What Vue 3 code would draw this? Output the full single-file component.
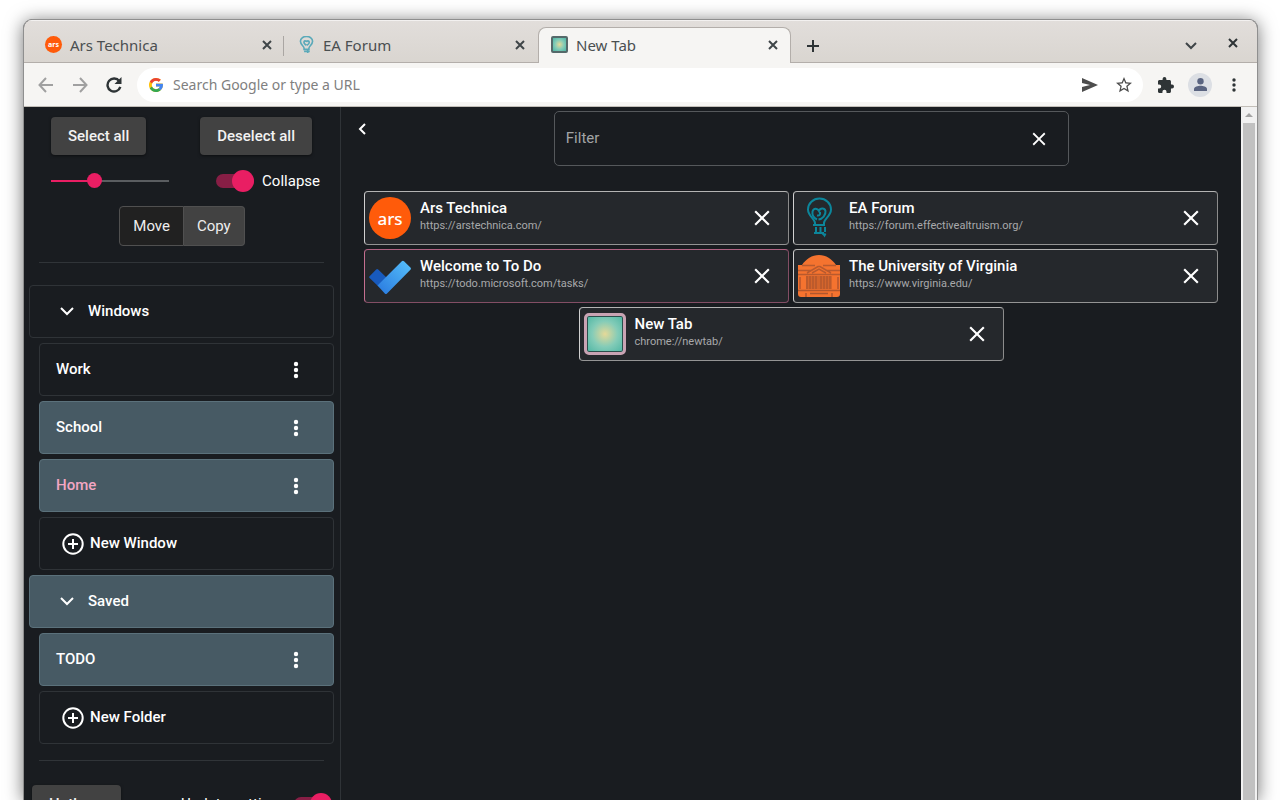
<script setup>
import { ref } from 'vue'

const browserTabs = [
  { title: 'Ars Technica', icon: 'ars', active: false },
  { title: 'EA Forum', icon: 'ea', active: false },
  { title: 'New Tab', icon: 'newtab', active: true },
]

const rows = [
  { label: 'Windows', kind: 'group' },
  { label: 'Work', kind: 'item' },
  { label: 'School', kind: 'item', selected: true },
  { label: 'Home', kind: 'item', selected: true, current: true },
  { label: 'New Window', kind: 'add' },
  { label: 'Saved', kind: 'group', selected: true },
  { label: 'TODO', kind: 'item', selected: true },
  { label: 'New Folder', kind: 'add' },
]

const cards = [
  { title: 'Ars Technica', url: 'https://arstechnica.com/', icon: 'ars' },
  { title: 'EA Forum', url: 'https://forum.effectivealtruism.org/', icon: 'ea' },
  { title: 'Welcome to To Do', url: 'https://todo.microsoft.com/tasks/', icon: 'todo', pinned: true },
  { title: 'The University of Virginia', url: 'https://www.virginia.edu/', icon: 'uva' },
  { title: 'New Tab', url: 'chrome://newtab/', icon: 'newtab' },
]

const zoom = ref(35)
const collapse = ref(true)
const updateSettings = ref(true)
const mode = ref('Move')
const filter = ref('')
const address = ref('')
const columns = [9, 12, 15, 18, 23, 26, 29, 32]
</script>

<template>
  <div class="desktop">
    <div class="window">
      <header class="titlebar">
        <div class="tabs">
          <div v-for="t in browserTabs" :key="t.title" class="tab" :class="{ active: t.active }">
            <span v-if="t.icon === 'ars'" class="fav ars">ars</span>
            <svg v-else-if="t.icon === 'ea'" class="fav" viewBox="0 0 42 42" fill="none" stroke="#5aa9b9" stroke-width="4">
              <path d="M15 30c0-5-9-8-9-17a15 12 0 0 1 30 0c0 9-9 12-9 17v3H15z" />
              <path d="M21 23c-5-3-7-6-6-9 2-4 6-1 6 1 1-4 6-4 7 0 0 4-4 7-6 8M15 38h14M24 34v8" />
            </svg>
            <span v-else class="fav glow"></span>
            <span class="tab-title">{{ t.title }}</span>
            <button class="plain" :aria-label="'Close ' + t.title">
              <svg width="10" height="10" viewBox="0 0 10 10" stroke="#3f4548" stroke-width="2"><path d="M1 1l8 8M9 1l-8 8" /></svg>
            </button>
          </div>
        </div>
        <button class="plain newtab" aria-label="New tab">
          <svg width="14" height="14" viewBox="0 0 14 14" stroke="#2e3436" stroke-width="2"><path d="M7 1v12M1 7h12" /></svg>
        </button>
        <div class="wincontrols">
          <button class="plain" aria-label="Search tabs">
            <svg width="12" height="8" viewBox="0 0 12 8" fill="none" stroke="#3f4548" stroke-width="2"><path d="M1 1l5 5 5-5" /></svg>
          </button>
          <button class="plain close" aria-label="Close window">
            <svg width="10" height="10" viewBox="0 0 10 10" stroke="#2e3436" stroke-width="2"><path d="M1 1l8 8M9 1l-8 8" /></svg>
          </button>
        </div>
      </header>

      <nav class="toolbar">
        <button class="plain tool" aria-label="Back">
          <svg width="16" height="16" viewBox="0 0 16 16" fill="none" stroke="#a0a0a0" stroke-width="2"><path d="M15 8H2M8 1L1.500 8 8 15" /></svg>
        </button>
        <button class="plain tool" aria-label="Forward">
          <svg width="16" height="16" viewBox="0 0 16 16" fill="none" stroke="#a0a0a0" stroke-width="2"><path d="M1 8h13M8 1l6.500 7L8 15" /></svg>
        </button>
        <button class="plain tool" aria-label="Reload">
          <svg width="16" height="16" viewBox="0 0 16 16" fill="none" stroke="#2e3436" stroke-width="2.400"><path d="M13.300 4.200A6.500 6.500 0 1 0 14.300 9.800" /><path d="M15.500 0v7h-7z" fill="#2e3436" stroke="none" /></svg>
        </button>
        <div class="omnibox">
          <svg width="14" height="14" viewBox="4 4 40 40" aria-hidden="true">
            <path fill="#FFC107" d="M43.600 20.100H42V20H24v8h11.300C33.700 32.700 29.200 36 24 36c-6.600 0-12-5.400-12-12s5.400-12 12-12c3.100 0 5.800 1.200 8 3l5.700-5.700C34 6.100 29.300 4 24 4 13 4 4 13 4 24s9 20 20 20 20-9 20-20c0-1.300-.1-2.700-.4-3.900z" />
            <path fill="#EA4335" d="M6.300 14.700l6.600 4.800C14.700 15.100 19 12 24 12c3.100 0 5.800 1.200 8 3l5.700-5.700C34 6.100 29.300 4 24 4 16.300 4 9.700 8.300 6.300 14.700z" />
            <path fill="#34A853" d="M24 44c5.200 0 9.900-2 13.400-5.200l-6.200-5.200A12 12 0 0 1 12.700 28l-6.500 5C9.500 39.600 16.200 44 24 44z" />
            <path fill="#4285F4" d="M43.600 20.100H24v8h11.300a12 12 0 0 1-4.100 5.500l6.200 5.200C37 39.200 44 34 44 24c0-1.300-.1-2.700-.4-3.900z" />
          </svg>
          <input v-model="address" type="text" placeholder="Search Google or type a URL" aria-label="Address" />
          <button class="plain" aria-label="Share">
            <svg width="16" height="14" viewBox="0 0 16 14" fill="#4d4d4d"><path d="M0 0l16 7-16 7V9l8-2-8-2z" /></svg>
          </button>
          <button class="plain star" aria-label="Bookmark">
            <svg width="16" height="16" viewBox="2 2 20 20" fill="#4d4d4d"><path d="M22 9.240l-7.190-.62L12 2 9.190 8.630 2 9.240l5.460 4.730L5.820 21 12 17.270 18.180 21l-1.630-7.030L22 9.240zM12 15.400l-3.760 2.270 1-4.280-3.320-2.880 4.380-.38L12 6.100l1.710 4.040 4.380.38-3.320 2.880 1 4.280L12 15.400z" /></svg>
          </button>
        </div>
        <button class="plain ext" aria-label="Extensions">
          <svg width="16" height="16" viewBox="2 1 21 21" fill="#2e3436"><path d="M20.500 11H19V7c0-1.100-.9-2-2-2h-4V3.500a2.500 2.500 0 0 0-5 0V5H4c-1.100 0-2 .9-2 2v3.800h1.500a2.700 2.700 0 0 1 0 5.400H2V20c0 1.100.9 2 2 2h3.800v-1.500a2.700 2.700 0 0 1 5.400 0V22H17c1.100 0 2-.9 2-2v-4h1.500a2.500 2.500 0 0 0 0-5z" /></svg>
        </button>
        <button class="plain avatar" aria-label="Profile">
          <svg width="13" height="13" viewBox="0 0 13 13" fill="#5a6480"><circle cx="6.500" cy="3.300" r="3.200" /><path d="M0 13v-2c0-2.200 4-3.200 6.500-3.200s6.500 1 6.500 3.200v2z" /></svg>
        </button>
        <button class="plain" aria-label="Browser menu">
          <svg width="4" height="14" viewBox="0 0 4 14" fill="#2e3436"><circle cx="2" cy="2" r="1.700" /><circle cx="2" cy="7" r="1.700" /><circle cx="2" cy="12" r="1.700" /></svg>
        </button>
      </nav>

      <div class="page">
        <aside class="sidebar">
          <div class="actions">
            <button class="btn">Select all</button>
            <button class="btn">Deselect all</button>
          </div>
          <div class="settings">
            <input v-model="zoom" class="slider" type="range" min="0" max="100" aria-label="Size" :style="{ '--fill': zoom + '%' }" />
            <label class="switch">
              <input v-model="collapse" type="checkbox" />
              <span>Collapse</span>
            </label>
          </div>
          <div class="modes">
            <button v-for="m in ['Move', 'Copy']" :key="m" :aria-pressed="mode === m" @click="mode = m">{{ m }}</button>
          </div>
          <hr />
          <ul class="list">
            <li v-for="r in rows" :key="r.label" :class="[r.kind, { selected: r.selected, current: r.current }]">
              <button class="plain row">
                <svg v-if="r.kind === 'group'" width="14" height="9" viewBox="0 0 14 9" fill="none" stroke="#fff" stroke-width="2"><path d="M1 1l6 6 6-6" /></svg>
                <svg v-if="r.kind === 'add'" width="22" height="22" viewBox="0 0 22 22" fill="none" stroke="#fff" stroke-width="2"><circle cx="11" cy="11" r="9.700" /><path d="M11 6v10M6 11h10" /></svg>
                <span>{{ r.label }}</span>
              </button>
              <button v-if="r.kind === 'item'" class="plain" :aria-label="r.label + ' menu'">
                <svg width="6" height="18" viewBox="0 0 6 18" fill="#fff"><circle cx="3" cy="3" r="2.200" /><circle cx="3" cy="9" r="2.200" /><circle cx="3" cy="15" r="2.200" /></svg>
              </button>
            </li>
          </ul>
          <hr />
          <div class="footer">
            <button class="btn">Hotkeys</button>
            <label class="switch">
              <span>Update settings</span>
              <input v-model="updateSettings" type="checkbox" />
            </label>
          </div>
        </aside>

        <main class="main">
          <div class="top">
            <button class="plain back" aria-label="Hide sidebar">
              <svg width="8" height="12" viewBox="0 0 8 12" fill="none" stroke="#fff" stroke-width="2"><path d="M7 1L2 6l5 5" /></svg>
            </button>
            <div class="search">
              <div class="filter">
                <input v-model="filter" type="text" placeholder="Filter" aria-label="Filter" />
                <button class="plain" aria-label="Clear filter">
                  <svg width="22" height="22" viewBox="0 0 24 24" fill="#fff"><path d="M19 6.410 17.590 5 12 10.590 6.410 5 5 6.410 10.590 12 5 17.590 6.410 19 12 13.410 17.590 19 19 17.590 13.410 12z" /></svg>
                </button>
              </div>
            </div>
          </div>

          <div class="cards">
            <article v-for="c in cards" :key="c.url" class="card" :class="{ pinned: c.pinned }">
              <span v-if="c.icon === 'ars'" class="icon ars">ars</span>
              <svg v-else-if="c.icon === 'ea'" class="icon" viewBox="0 0 42 42" fill="none" stroke="#0c869b" stroke-width="2">
                <path d="M17 28v-2c0-4-7-7-7-13.500a11.500 11 0 0 1 23 0c0 6.500-7 9.500-7 13.500v2H15" />
                <path d="M19 22.500c-4-2-5-5-4.500-8 1-3.500 5-3.500 6.500-.5 1-3 5.500-3.500 6.500 0 .500 4-3 8-7 8.500M19 18.500c2.500.5 3.500-1 3-3.500" />
                <path d="M18 30v6M22.500 30v6M27 30v5M16 36h10M24 35c0 2 1.500 2 2.500 3.500l1-2" />
              </svg>
              <svg v-else-if="c.icon === 'todo'" class="icon" viewBox="0 0 42 42">
                <defs>
                  <linearGradient id="tick" x1="0" y1="1" x2="1" y2="0"><stop offset="0" stop-color="#2878df" /><stop offset="1" stop-color="#57c1fb" /></linearGradient>
                </defs>
                <path fill="#185abd" d="M.6 21.200 7.200 14.500q1-1 2 0L18 23l-8.500 8.500L.6 23q-1-1 0-1.800z" />
                <path fill="url(#tick)" d="M8.500 30.500 32.800 6.200q1.100-1.100 2.200 0l6.400 6.400q1.100 1.100 0 2.200L18 38.400q-1.100 1.100-2.200 0z" />
              </svg>
              <svg v-else-if="c.icon === 'uva'" class="icon" viewBox="0 0 42 42">
                <path fill="#f5732f" d="M4 10C8 4 14 0 21 0s13 4 17 10h4v29q0 3-3 3H3q-3 0-3-3V10z" />
                <path fill="none" stroke="#b85a2e" stroke-width="1.500" d="M4 10.500h13M25 10.500h13M0 15.500h13M29 15.500h13M9 18 20 11.500h2L33 18M14 18l7-4 7 4M0 19.500h42" />
                <path fill="#d4652c" d="M8 21h26v13H8z" />
                <path v-for="x in columns" :key="x" stroke="#b0562d" stroke-width="1.300" :d="`M${x} 21v13`" />
                <path stroke="#c55c2d" stroke-width="2" d="M2 22v12M40 22v12" />
                <path fill="none" stroke="#b0562d" stroke-width="1.500" d="M0 35.500h42M8 38v4M12 38.500h18M34 38v4" />
              </svg>
              <span v-else class="icon glow"></span>
              <div class="text">
                <h2>{{ c.title }}</h2>
                <p>{{ c.url }}</p>
              </div>
              <button class="plain" :aria-label="'Close ' + c.title">
                <svg width="26" height="26" viewBox="0 0 24 24" fill="#fff"><path d="M19 6.410 17.590 5 12 10.590 6.410 5 5 6.410 10.590 12 5 17.590 6.410 19 12 13.410 17.590 19 19 17.590 13.410 12z" /></svg>
              </button>
            </article>
          </div>
        </main>

        <div class="scrollbar" aria-hidden="true">
          <svg width="8" height="4" viewBox="0 0 8 4" fill="#a3a3a3"><path d="M4 0l4 4H0z" /></svg>
          <span></span>
        </div>
      </div>
    </div>
  </div>
</template>

<style>
body {
  margin: 0;
  background: #fff;
}
</style>

<style scoped>
* {
  box-sizing: border-box;
}

.desktop {
  height: 100vh;
  padding: 19px 22px 0 23px;
  overflow: hidden;
  font-family: Roboto, sans-serif;
  font-size: 15px;
  color: #fff;
}

.window {
  display: flex;
  flex-direction: column;
  height: 100%;
  border: 1px solid #8f8f8f;
  border-bottom: 0;
  border-radius: 9px 9px 0 0;
  overflow: hidden;
  background: #191c20;
  box-shadow: 0 2px 18px rgba(0, 0, 0, 0.55);
}

.plain {
  display: flex;
  align-items: center;
  justify-content: center;
  padding: 0;
  border: 0;
  background: none;
  color: inherit;
  font: inherit;
}

svg {
  display: block;
  flex: none;
}

/* Browser chrome */
.titlebar {
  display: flex;
  flex: none;
  height: 43px;
  padding-left: 8px;
  background: linear-gradient(#e2dedb, #d9d5d0);
  box-shadow: inset 0 1px #f3f1f0, inset 0 -1px #b3aeaa;
  font-family: "Noto Sans", sans-serif;
  color: #4a4f51;
}

.tabs {
  display: flex;
  flex: 0 1 759px;
  align-items: flex-end;
}

.tab {
  display: flex;
  flex: 1;
  align-items: center;
  gap: 8px;
  height: 36px;
  padding: 0 12px 2px;
  border: 1px solid transparent;
  border-bottom: 0;
}

.tab:first-child {
  background: linear-gradient(#aaa6a3, #aaa6a3) right 8px / 1px 20px no-repeat;
}

.tab.active {
  border-color: #b3aeaa;
  border-radius: 8px 8px 0 0;
  background: #f6f5f3;
}

.tab-title {
  flex: 1;
}

.fav {
  width: 17px;
  height: 17px;
}

.ars {
  display: flex;
  align-items: center;
  justify-content: center;
  flex: none;
  border-radius: 50%;
  background: #ff5b0a;
  color: #fff;
  font-family: "Noto Sans", sans-serif;
}

.fav.ars {
  font-size: 7px;
  font-weight: 700;
}

.glow {
  flex: none;
  border: 2px solid #55696a;
  border-radius: 2px;
  background: radial-gradient(circle, #e5d998, #84ccb8 50%, #4cb5a3);
}

.newtab {
  width: 44px;
  padding-top: 8px;
}

.wincontrols {
  display: flex;
  align-items: center;
  gap: 31px;
  margin-left: auto;
  padding: 8px 19px 0 0;
}

.wincontrols .close {
  margin-bottom: 6px;
}

.toolbar {
  display: flex;
  flex: none;
  align-items: center;
  height: 44px;
  padding: 0 21px 0 5px;
  border-bottom: 1px solid #c2beb8;
  background: #f6f5f3;
}

.tool {
  width: 34px;
}

.omnibox {
  display: flex;
  flex: 1;
  align-items: center;
  height: 34px;
  margin: 0 15px 0 6px;
  padding: 0 11px 0 12px;
  border-radius: 17px;
  background: #fff;
}

.omnibox input {
  flex: 1;
  min-width: 0;
  padding: 0 10px;
  border: 0;
  outline: 0;
  background: none;
  font-family: "Noto Sans", sans-serif;
  font-size: 14px;
}

.omnibox input::placeholder {
  color: #808080;
  opacity: 1;
}

.omnibox .star {
  margin-left: 18px;
}

.avatar {
  width: 24px;
  height: 24px;
  margin: 0 20px 0 14px;
  border-radius: 50%;
  background: #dcdfe4;
}

/* Extension page */
.page {
  display: flex;
  flex: 1;
  min-height: 0;
}

.sidebar {
  flex: none;
  width: 317px;
  border-right: 1px solid #2f3337;
  overflow: hidden;
}

.actions,
.settings,
.footer {
  display: flex;
  align-items: center;
  justify-content: space-between;
}

.actions {
  padding: 10px 28px 0 27px;
}

.btn {
  height: 38px;
  padding: 0 17px;
  border: 0;
  border-radius: 4px;
  background: #424242;
  box-shadow: 0 1px 3px rgba(0, 0, 0, 0.5);
  color: #f2f2f2;
  font: 500 15px Roboto, sans-serif;
}

.settings {
  height: 51px;
  padding: 0 20px 0 27px;
}

.slider {
  width: 118px;
  height: 16px;
  margin: 0;
  appearance: none;
  background: linear-gradient(#e91e63, #e91e63) left / var(--fill) 2px no-repeat,
    linear-gradient(#5a5d60, #5a5d60) center / 100% 2px no-repeat;
}

.slider::-webkit-slider-thumb {
  width: 15px;
  height: 15px;
  appearance: none;
  border-radius: 50%;
  background: #e91e63;
}

.switch {
  display: flex;
  align-items: center;
  gap: 8px;
}

.switch input {
  position: relative;
  width: 38px;
  height: 14px;
  margin: 0;
  appearance: none;
  border-radius: 7px;
  background: #871e45;
}

.switch input::after {
  content: "";
  position: absolute;
  top: -4px;
  right: 0;
  width: 22px;
  height: 22px;
  border-radius: 50%;
  background: #e91e63;
}

.modes {
  display: flex;
  justify-content: center;
  height: 40px;
  margin-bottom: 16px;
}

.modes button {
  padding: 0 13px;
  border: 1px solid #505050;
  background: #424242;
  color: #eee;
  font: 400 15px Roboto, sans-serif;
}

.modes button:first-child {
  border-radius: 4px 0 0 4px;
}

.modes button:last-child {
  border-left: 0;
  border-radius: 0 4px 4px 0;
}

.modes button[aria-pressed="true"] {
  background: #212121;
}

hr {
  height: 1px;
  margin: 0 16px 0 15px;
  border: 0;
  background: #303438;
}

.list {
  display: flex;
  flex-direction: column;
  gap: 5px;
  margin: 22px 6px 16px 5px;
  padding: 0;
  list-style: none;
  font-weight: 500;
}

.list li {
  display: flex;
  align-items: center;
  height: 53px;
  margin-left: 10px;
  padding: 0 34px 0 16px;
  border: 1px solid #2f3337;
  border-radius: 4px;
}

.list .group {
  margin-left: 0;
  padding-left: 30px;
}

.list .add {
  padding-left: 22px;
}

.list .selected {
  border-color: #5b717b;
  background: #475a64;
}

.list .current {
  color: #f3a6c3;
}

.row {
  flex: 1;
  justify-content: flex-start;
  gap: 6px;
  height: 100%;
}

.row span {
  padding-bottom: 2px;
}

.group .row {
  gap: 14px;
}

.footer {
  padding: 24px 8px 0;
}

.main {
  flex: 1;
  min-width: 0;
}

.top {
  display: flex;
  align-items: flex-start;
  padding-top: 4px;
}

.back {
  width: 41px;
  height: 36px;
}

.search {
  display: flex;
  flex: 1;
  justify-content: center;
}

.filter {
  display: flex;
  align-items: center;
  width: 60%;
  height: 55px;
  padding: 0 18px 0 0;
  border: 1px solid #55585b;
  border-radius: 5px;
}

.filter input {
  flex: 1;
  min-width: 0;
  padding: 0 11px 2px;
  border: 0;
  outline: 0;
  background: none;
  color: #fff;
  font: 400 15px Roboto, sans-serif;
}

.filter input::placeholder {
  color: #a3a4a6;
  opacity: 1;
}

.cards {
  display: flex;
  flex-wrap: wrap;
  justify-content: center;
  gap: 4px;
  padding: 25px 23px 0;
}

.card {
  display: flex;
  align-items: center;
  width: calc(50% - 2px);
  height: 54px;
  padding: 0 13px 0 4px;
  border: 1px solid;
  border-color: #b4b4b4 #8c8c8c #949494 #d0d0d0;
  border-radius: 4px;
  background: #25282c;
}

.card.pinned {
  border-color: #b06282 #834e65 #834e65 #c46f90;
}

.icon {
  width: 42px;
  height: 42px;
}

.icon.ars {
  font-size: 17px;
  font-weight: 500;
}

.icon.glow {
  border: 3px solid #c9a3b3;
  border-radius: 5px;
  box-shadow: inset 0 0 0 1px #2b4f4c;
}

.text {
  flex: 1;
  min-width: 0;
  padding: 0 9px 2px;
}

.text h2 {
  margin: 0;
  font-size: 15px;
  font-weight: 500;
  line-height: 18px;
}

.text p {
  margin: 0;
  color: #a8a9ab;
  font-size: 11px;
  line-height: 18px;
}

.scrollbar {
  display: flex;
  flex: none;
  flex-direction: column;
  align-items: center;
  width: 16px;
  padding-top: 6px;
  background: #f1f1f1;
}

.scrollbar span {
  flex: 1;
  width: 12px;
  margin-top: 6px;
  background: #c1c1c1;
}
</style>
